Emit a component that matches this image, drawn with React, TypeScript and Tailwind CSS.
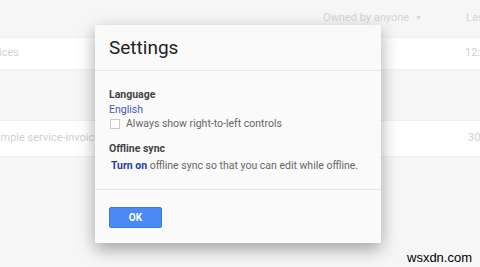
export default function App() {
  return (
    <div className="relative w-[480px] h-[267px] overflow-hidden bg-[#f6f6f6] font-['Roboto',sans-serif]">
      <div className="flex h-[37px] items-center whitespace-nowrap text-[11px] text-[#d4d4d4]">
        <div className="w-[323px] shrink-0" />
        <div className="flex shrink-0 items-center gap-[6px]">
          <span>Owned by anyone</span>
          <span className="text-[7px]">▼</span>
        </div>
        <span className="ml-[44px] shrink-0">Last modified</span>
      </div>
      <div className="flex h-[33px] items-center whitespace-nowrap border-y border-[#efefef] bg-white text-[11px] text-[#d0d0d0]">
        <span className="ml-[-1px] w-[466px] shrink-0">ices</span>
        <span className="shrink-0">12:45</span>
      </div>
      <div className="h-[50px]" />
      <div className="flex h-[37px] items-center whitespace-nowrap border-y border-[#efefef] bg-white text-[11px] text-[#d0d0d0]">
        <span className="ml-[-12px] w-[480px] shrink-0">Sample service-invoice</span>
        <span className="shrink-0">30 Oct</span>
      </div>

      <div className="absolute left-[95px] top-[25px] flex h-[218px] w-[286px] flex-col bg-[#fafafa] shadow-[0_6px_16px_rgba(0,0,0,0.35)]">
        <div className="flex h-[46px] items-center border-b border-[#e6e6e6] px-[14px]">
          <h1 className="text-[19px] leading-none text-[#222]">Settings</h1>
        </div>
        <div className="flex flex-col whitespace-nowrap px-[14px] pt-[17px] text-[10.5px] leading-[14px]">
          <div className="font-bold text-[#444]">Language</div>
          <div className="mt-[1px] text-[#3f57c6]">English</div>
          <label className="flex items-center gap-[6px] text-[#666]">
            <span className="ml-[1px] h-[10px] w-[10px] border border-[#c8c8c8] bg-white" />
            <span>Always show right-to-left controls</span>
          </label>
          <div className="mt-[11px] font-bold text-[#444]">Offline sync</div>
          <div className="mt-[3px] pl-[2px] text-[#666]">
            <span className="font-bold text-[#1f3ea8]">Turn on</span> offline sync so that you can edit while offline.
          </div>
        </div>
        <div className="mt-auto h-[54px] border-t border-[#e6e6e6] px-[14px] pt-[17px]">
          <button className="flex h-[21px] w-[53px] items-center justify-center rounded-[2px] border border-[#3a78e0] bg-[#4a8af4] text-[10px] font-bold text-white">
            OK
          </button>
        </div>
      </div>

      <div className="absolute left-[407px] top-[248px] font-['Liberation_Sans',sans-serif] text-[13px] text-black">
        wsxdn.com
      </div>
    </div>
  );
}
